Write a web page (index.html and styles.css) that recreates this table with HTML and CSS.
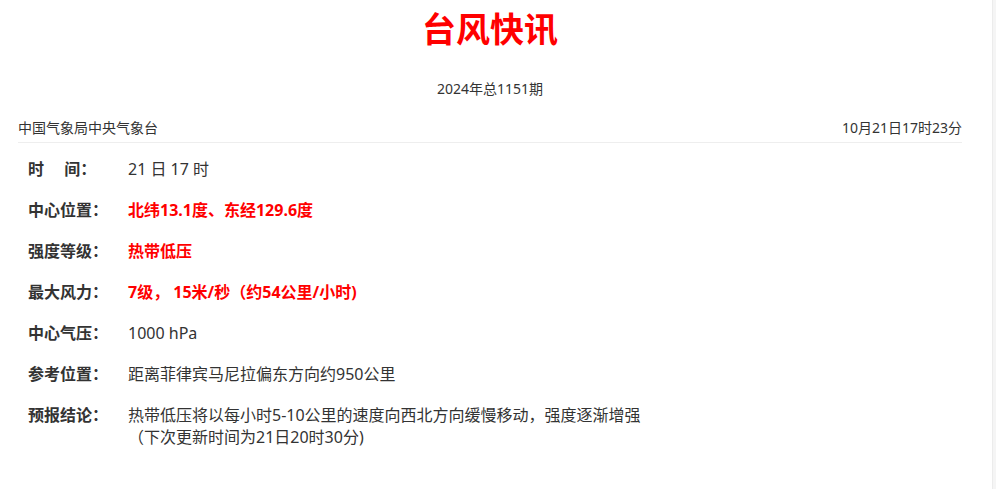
FILE: index.html
```html
<!DOCTYPE html>
<html lang="zh-CN">
<head>
    <meta charset="utf-8">
    <meta name="viewport" content="width=device-width, initial-scale=1">
    <title>台风快讯</title>
    <link rel="stylesheet" href="styles.css">
</head>
<body>
    <div class="page">
        <h1 class="title">台风快讯</h1>
        <p class="issue">2024年总1151期</p>

        <div class="source">
            <span>中国气象局中央气象台</span>
            <span>10月21日17时23分</span>
        </div>

        <div class="info">
            <div class="row">
                <span class="label">时&emsp; 间：</span>
                <span class="value">21 日 17 时</span>
            </div>
            <div class="row">
                <span class="label">中心位置：</span>
                <span class="value hot">北纬13.1度、东经129.6度</span>
            </div>
            <div class="row">
                <span class="label">强度等级：</span>
                <span class="value hot">热带低压</span>
            </div>
            <div class="row">
                <span class="label">最大风力：</span>
                <span class="value hot">7级， 15米/秒（约54公里/小时)</span>
            </div>
            <div class="row">
                <span class="label">中心气压：</span>
                <span class="value">1000 hPa</span>
            </div>
            <div class="row">
                <span class="label">参考位置：</span>
                <span class="value">距离菲律宾马尼拉偏东方向约950公里</span>
            </div>
            <div class="row">
                <span class="label">预报结论：</span>
                <span class="value">热带低压将以每小时5-10公里的速度向西北方向缓慢移动，强度逐渐增强<br>（下次更新时间为21日20时30分)</span>
            </div>
        </div>
    </div>
</body>
</html>
```

FILE: styles.css
```css
html, body {
    margin: 0;
    padding: 0;
}
body {
    background: #f5f5f5;
    font-family: "Noto Sans", "Noto Sans CJK SC", sans-serif;
    color: #333;
}
.page {
    width: 993px;
    min-height: 489px;
    box-sizing: border-box;
    background: #fff;
    padding: 7px 30px 0 18px;
    border-right: 1px solid #ececec;
}
.title {
    margin: 0;
    text-align: center;
    font-size: 34px;
    line-height: 44px;
    font-weight: bold;
    color: #ff0000;
}
.issue {
    margin: 28px 0 0;
    text-align: center;
    font-size: 14px;
    line-height: 20px;
    color: #333;
}
.source {
    display: flex;
    justify-content: space-between;
    margin-top: 19px;
    padding-bottom: 4px;
    border-bottom: 1px solid #eee;
    font-size: 14px;
    line-height: 20px;
    color: #333;
}
.info {
    padding: 15px 0 0 10px;
}
.row {
    display: flex;
    margin-bottom: 19px;
    font-size: 16px;
    line-height: 22px;
}
.label {
    width: 100px;
    flex-shrink: 0;
    font-weight: bold;
    color: #333;
}
.value {
    color: #333;
}
.value.hot {
    color: #ff0000;
    font-weight: bold;
}
```
